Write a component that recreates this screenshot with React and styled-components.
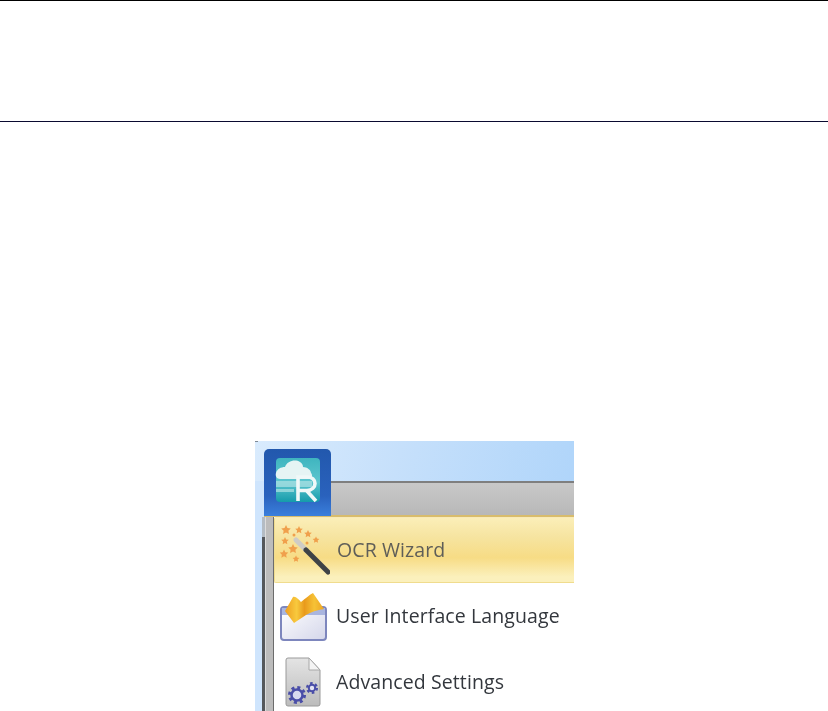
import React from "react";
import styled, { createGlobalStyle } from "styled-components";

const Global = createGlobalStyle`
  html, body { margin: 0; padding: 0; background: #fff; overflow: hidden; }
  body { font-family: "Open Sans", "Liberation Sans", sans-serif; }
`;
const Page = styled.div`width: 828px; height: 711px; overflow: hidden; display: flex; flex-direction: column;`;
const Header = styled.header`
  height: 120px; flex: none;
  border-top: 1px solid #000; border-bottom: 1px solid #0a0a30;
`;
const Shot = styled.div`
  position: relative; width: 319px; height: 270px; margin: 319px 0 0 255px; flex: none; overflow: hidden;
  display: flex; flex-direction: column; background: #cfe5fd; filter: blur(0.35px);
`;
const Corner = styled.span`position: absolute; left: 0; top: 0; width: 3px; height: 1px; background: #7f8a96;`;
const TitleBar = styled.div`
  height: 40px; flex: none;
  background: linear-gradient(105deg, #d9ebfd 0%, #c6e0fb 45%, #b0d5fa 100%);
`;
const TabStrip = styled.div`
  height: 36px; flex: none; box-sizing: border-box;
  border-top: 2px solid #7f7f7f; border-bottom: 2px solid #d8bc6c;
  background: linear-gradient(#c8c8c8, #b8b8b8);
  margin-left: 9px;
`;
const Body = styled.div`flex: 1; display: flex; min-height: 0; padding-left: 7px;`;
const RailEdge = styled.div`
  width: 3px; flex: none; background: linear-gradient(#b4bcc4 0 20px, #55585c 20px);
`;
const Rail = styled.div`
  width: 9px; flex: none; box-sizing: border-box; border-right: 1px solid #6c6c6c;
  background: linear-gradient(90deg, #dcdcdc 0 1px, #bcbcbc 1px);
`;
const Menu = styled.div`flex: 1; display: flex; flex-direction: column; background: #fff; min-width: 0;`;
const Row = styled.div`
  height: 66px; flex: none; box-sizing: border-box; display: flex; align-items: center; gap: 6px;
  font-size: 19.5px; color: ${p => p.$active ? "#5f5e58" : "#33373d"}; white-space: nowrap;
  letter-spacing: 0.1px; line-height: 1;
  ${p => p.$active && `
    border: 1px solid #f0dc8e; border-right: none; border-top-color: #f8eab8; border-top-left-radius: 2px; border-bottom-left-radius: 2px;
    background: linear-gradient(#fbeeb8 0%, #f6e4a0 30%, #f7dc85 62%, #fbf0bc 92%);
  `}
`;
const IconSlot = styled.span`width: 56px; height: 54px; flex: none; display: flex; align-items: center; justify-content: center;`;
const Logo = styled.div`
  position: absolute; left: 9px; top: 8px; width: 67px; height: 67px; box-sizing: border-box; padding-bottom: 6px;
  border-radius: 5px 5px 0 0; display: flex; align-items: center; justify-content: center;
  background: linear-gradient(#2258ad 0%, #2a62bd 70%, #3a7fdc 100%);
`;

const LogoIcon = () => (
  <svg width="46" height="46" viewBox="0 0 46 46">
    <defs>
      <linearGradient id="tl" x1="0" y1="0" x2="0" y2="1">
        <stop offset="0" stopColor="#3fb5bf" /><stop offset="0.55" stopColor="#5ec6cf" /><stop offset="1" stopColor="#159bab" />
      </linearGradient>
    </defs>
    <rect x="1" y="1" width="44" height="44" rx="4" fill="url(#tl)" />
    <path d="M1 24h36v6H1zM1 32h18v3H1z" fill="#a8dfe2" opacity=".75" />
    <path d="M1 16c1-4 5-6 9-6 2-6 10-8 15-5 2 1 3 3 3 5 4 0 8 3 8 6 2 2 1 6-2 6H5c-3 0-5-3-4-6z" fill="#e6f4f4" />
    <path d="M23 44V20h9c5 0 8 3 8 6.500s-3 7-8 7H23M31 33l10 11" fill="none" stroke="#f0f8f8" strokeWidth="3.600" />
  </svg>
);
const Star = ({ x, y, r }) => {
  const pts = [];
  for (let i = 0; i < 10; i++) {
    const a = -Math.PI / 2 + (i * Math.PI) / 5;
    const d = i % 2 ? r * 0.5 : r;
    pts.push(`${(x + d * Math.cos(a)).toFixed(2)},${(y + d * Math.sin(a)).toFixed(2)}`);
  }
  return <polygon points={pts.join(" ")} />;
};
const Wand = () => (
  <svg width="54" height="54" viewBox="0 0 54 54">
    <g fill="#f0a04c">
      <Star x={10} y={7} r={5} /><Star x={23} y={7} r={4} /><Star x={32} y={11} r={4} />
      <Star x={40} y={17} r={3.500} /><Star x={9} y={18} r={4} /><Star x={17} y={26} r={5} />
      <Star x={8} y={31} r={4.500} /><Star x={20} y={36} r={3.500} />
      <circle cx="18" cy="12" r="1.500" /><circle cx="31" cy="20" r="1.500" />
    </g>
    <path d="M20 17L30 27" stroke="#cfccc6" strokeWidth="5" strokeLinecap="round" />
    <path d="M30 27L52 49" stroke="#3f4346" strokeWidth="5" strokeLinecap="round" />
  </svg>
);
const Book = () => (
  <svg width="50" height="50" viewBox="0 0 50 50">
    <defs>
      <linearGradient id="bw" x1="0" y1="0" x2="1" y2="1"><stop offset="0" stopColor="#fff" /><stop offset="1" stopColor="#d4d6ea" /></linearGradient>
      <linearGradient id="bk" x1="0" y1="0" x2="1" y2="0">
        <stop offset="0" stopColor="#ee9e20" /><stop offset="0.3" stopColor="#f8ca3e" /><stop offset="0.5" stopColor="#e99a1c" /><stop offset="0.75" stopColor="#f6c236" /><stop offset="1" stopColor="#eca524" />
      </linearGradient>
    </defs>
    <rect x="4" y="16" width="45" height="33" rx="3" fill="url(#bw)" stroke="#7d86bd" strokeWidth="2" />
    <rect x="5" y="17" width="43" height="7" fill="#a9b5df" />
    <path d="M8 20L16 6c3-1 6 3 8 5 4-3 8-7 12-9l11 16c-7 1-13 3-18 6L17 32z" fill="url(#bk)" />
  </svg>
);
const Doc = () => (
  <svg width="38" height="50" viewBox="0 0 38 50">
    <defs>
      <linearGradient id="dc" x1="0" y1="0" x2="0" y2="1"><stop offset="0" stopColor="#e4e4e4" /><stop offset="1" stopColor="#bcbcbc" /></linearGradient>
    </defs>
    <path d="M5 1h21l11 12v34a2 2 0 0 1-2 2H5a2 2 0 0 1-2-2V3a2 2 0 0 1 2-2z" fill="url(#dc)" stroke="#9a9a9a" />
    <path d="M26 1v12h11z" fill="#f4f4f4" stroke="#a8a8a8" />
    <circle cx="14" cy="38" r="7.500" fill="none" stroke="#4a4ea8" strokeWidth="3" strokeDasharray="3 2.900" />
    <circle cx="14" cy="38" r="5.500" fill="#d8d9f0" stroke="#4a4ea8" strokeWidth="2.500" />
    <circle cx="29" cy="31" r="4.800" fill="none" stroke="#4a4ea8" strokeWidth="2.500" strokeDasharray="2.500 2.530" />
    <circle cx="29" cy="31" r="3.200" fill="#e4e4f4" stroke="#4a4ea8" strokeWidth="2" />
  </svg>
);

export default function App() {
  return (
    <Page>
      <Global />
      <Header />
      <Shot>
        <Corner />
        <TitleBar />
        <TabStrip />
        <Logo><LogoIcon /></Logo>
        <Body>
          <RailEdge />
          <Rail />
          <Menu>
            <Row $active><IconSlot><Wand /></IconSlot>OCR Wizard</Row>
            <Row><IconSlot><Book /></IconSlot>User Interface Language</Row>
            <Row><IconSlot><Doc /></IconSlot>Advanced Settings</Row>
          </Menu>
        </Body>
      </Shot>
    </Page>
  );
}
